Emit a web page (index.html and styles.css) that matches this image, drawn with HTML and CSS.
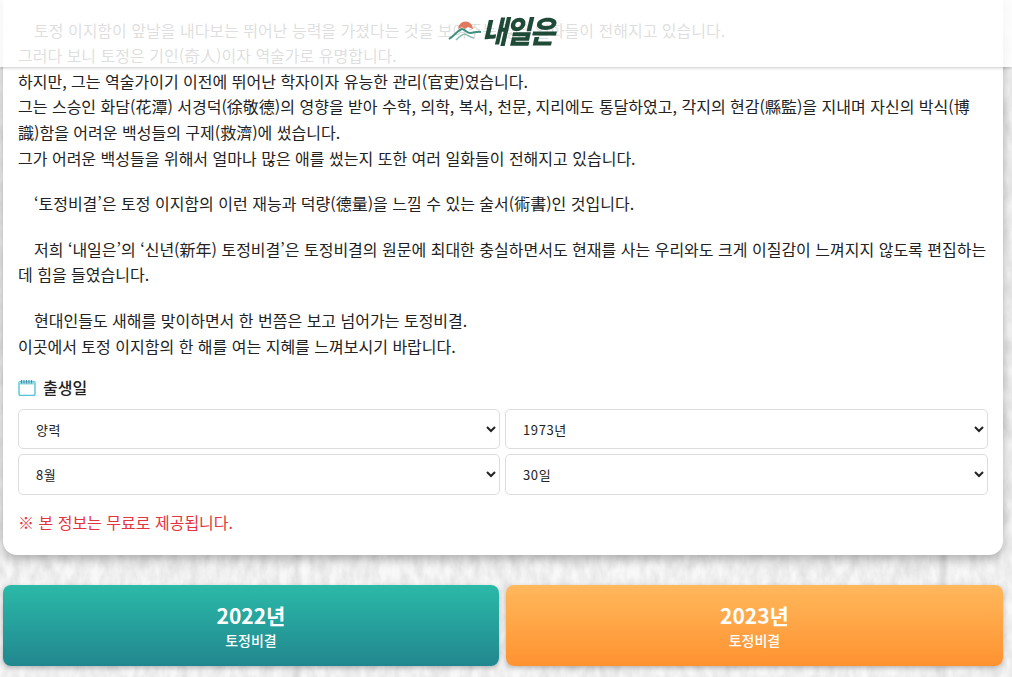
FILE: index.html
```html
<!DOCTYPE html>
<html lang="ko">
  <head>
    <title>내일은 토정비결</title>
    <meta name="viewport" content="width=device-width, initial-scale=1" />
    <link rel="stylesheet" href="styles.css">
  </head>
  <body>
    <header class="top-bar">
      <div class="logo">
        <svg class="logo-mark" width="34" height="22" viewBox="0 0 34 22" fill="none">
          <path d="M10 10 A7.5 7.5 0 0 1 25 10 L20 8 L17 10 L14 8 Z" fill="#e2795f" />
          <path d="M1 20 C6 17 10 11 14 10 C17 10 18 14 22 14 C26 14 29 12 33 13" stroke="#3f8f80" stroke-width="2" />
          <path d="M8 21 C11 18 14 15 17 15 C20 16 22 19 26 19" stroke="#86c0b6" stroke-width="1.5" />
        </svg>
        <span class="logo-text">내일은</span>
      </div>
    </header>

    <main class="card">
      <p>&emsp;토정 이지함이 앞날을 내다보는 뛰어난 능력을 가졌다는 것을 보여주는 많은 일화들이 전해지고 있습니다.<br>
      그러다 보니 토정은 기인(奇人)이자 역술가로 유명합니다.<br>
      하지만, 그는 역술가이기 이전에 뛰어난 학자이자 유능한 관리(官吏)였습니다.<br>
      그는 스승인 화담(花潭) 서경덕(徐敬德)의 영향을 받아 수학, 의학, 복서, 천문, 지리에도 통달하였고, 각지의 현감(縣監)을 지내며 자신의 박식(博識)함을 어려운 백성들의 구제(救濟)에 썼습니다.<br>
      그가 어려운 백성들을 위해서 얼마나 많은 애를 썼는지 또한 여러 일화들이 전해지고 있습니다.</p>

      <p>&emsp;‘토정비결’은 토정 이지함의 이런 재능과 덕량(德量)을 느낄 수 있는 술서(術書)인 것입니다.</p>

      <p>&emsp;저희 ‘내일은’의 ‘신년(新年) 토정비결’은 토정비결의 원문에 최대한 충실하면서도 현재를 사는 우리와도 크게 이질감이 느껴지지 않도록 편집하는데 힘을 들였습니다.</p>

      <p>&emsp;현대인들도 새해를 맞이하면서 한 번쯤은 보고 넘어가는 토정비결.<br>
      이곳에서 토정 이지함의 한 해를 여는 지혜를 느껴보시기 바랍니다.</p>

      <form class="birth-form">
        <div class="birth-title">
          <svg width="18" height="17" viewBox="0 0 18 17" fill="none" stroke="#55c3d6">
            <rect x="1" y="2.5" width="16" height="14" rx="1.5" stroke-width="1.4" />
            <rect x="1" y="2.5" width="16" height="3" fill="#8fd8e4" stroke="none" />
            <path d="M3.5 1V4.5M6 1V4.5M8.5 1V4.5M11 1V4.5M13.5 1V4.5" stroke="#4a8fa3" stroke-width="1" />
          </svg>
          <span>출생일</span>
        </div>
        <div class="select-grid">
          <select><option>양력</option><option>음력</option></select>
          <select><option>1973년</option></select>
          <select class="tall"><option>8월</option></select>
          <select class="tall"><option>30일</option></select>
        </div>
        <p class="notice">※ 본 정보는 무료로 제공됩니다.</p>
      </form>
    </main>

    <nav class="year-links">
      <a class="year-btn teal" href="#"><strong>2022년</strong><span>토정비결</span></a>
      <a class="year-btn orange" href="#"><strong>2023년</strong><span>토정비결</span></a>
    </nav>
  </body>
</html>
```

FILE: styles.css
```css
html, body {
  height: 100%;
}

body {
  margin: 0;
  padding: 0 9px 0 3px;
  overflow: hidden;
  font-family: "Noto Sans CJK KR", "Noto Sans", sans-serif;
  font-size: 16px;
  color: #222;
  background-color: #eee;
  background-image:
    linear-gradient(90deg, transparent 290px, rgba(0, 0, 0, 0.07) 297px, rgba(255, 255, 255, 0.5) 303px, transparent 310px),
    linear-gradient(90deg, transparent 935px, rgba(0, 0, 0, 0.08) 944px, rgba(255, 255, 255, 0.4) 950px, transparent 956px),
    url("data:image/svg+xml,%3Csvg xmlns='http://www.w3.org/2000/svg' width='1012' height='677'%3E%3Cfilter id='n'%3E%3CfeTurbulence type='fractalNoise' baseFrequency='0.1 0.05' numOctaves='4' seed='4'/%3E%3CfeColorMatrix values='0 0 0 0 0.72 0 0 0 0 0.72 0 0 0 0 0.72 1.4 0 0 0 -0.4'/%3E%3C/filter%3E%3Crect width='1012' height='677' fill='%23f8f8f8'/%3E%3Crect width='1012' height='677' filter='url(%23n)'/%3E%3C/svg%3E");
}

.top-bar {
  position: fixed;
  top: 0;
  left: 0;
  width: 100%;
  height: 67px;
  background-color: rgba(255, 255, 255, 0.85);
  box-shadow: 0 1px 3px rgba(0, 0, 0, 0.22);
  z-index: 10;
}

.logo {
  display: flex;
  align-items: center;
  justify-content: center;
  height: 60px;
  padding-right: 11px;
}

.logo-text {
  font-size: 28px;
  font-weight: 900;
  font-style: italic;
  line-height: 1;
  letter-spacing: -2px;
  color: #1f4a38;
  transform: scaleY(1.1);
}

.card {
  height: 555px;
  box-sizing: border-box;
  padding: 17.6px 15px 0;
  background-color: #fff;
  border-radius: 0 0 14px 14px;
  box-shadow: 0 4px 12px rgba(0, 0, 0, 0.3);
}

.card p {
  margin: 0 0 20px;
  line-height: 25.6px;
}

.birth-form {
  margin-top: -4px;
}

.birth-title {
  display: flex;
  align-items: center;
  gap: 7px;
  font-weight: 500;
  height: 24px;
  margin-bottom: 10px;
}

.select-grid {
  display: grid;
  grid-template-columns: 482px 483px;
  gap: 5px;
}

select {
  height: 40px;
  padding: 0 13px;
  font-family: "Noto Sans CJK KR", sans-serif;
  font-size: 13px;
  letter-spacing: 0.6px;
  color: #222;
  background-color: #fff;
  border: 1px solid #ddd;
  border-radius: 5px;
}

.tall {
  height: 41px;
}

.card .notice {
  margin: 15px 0 0;
  color: #e5343d;
}

.year-links {
  display: grid;
  grid-template-columns: 496px 497px;
  gap: 7px;
  margin-top: 30px;
}

.year-btn {
  height: 81px;
  box-sizing: border-box;
  padding-top: 15px;
  display: flex;
  flex-direction: column;
  align-items: center;
  color: #fff;
  text-decoration: none;
  border-radius: 8px;
  box-shadow: 0 2px 5px rgba(0, 0, 0, 0.25);
}

.year-btn strong {
  font-size: 21px;
  font-weight: 700;
  line-height: 31px;
}

.year-btn span {
  font-size: 14px;
  font-weight: 500;
  line-height: 18px;
}

.teal {
  background: linear-gradient(#2bb9a8, #21878f);
}

.orange {
  background: linear-gradient(#ffb85c, #ff9230);
}
```
